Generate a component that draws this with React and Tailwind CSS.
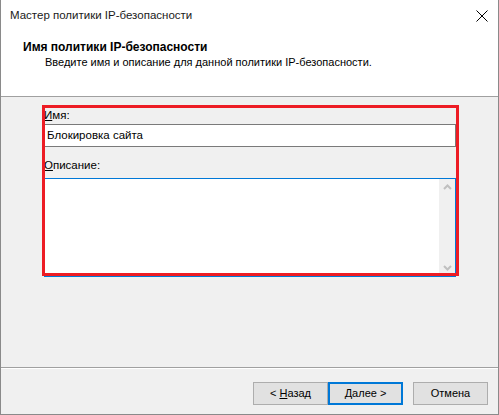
const Btn = ({ children, primary }) => (
  <button
    className={
      primary
        ? 'w-[75px] h-[23px] bg-[#e1e1e1] border-2 border-[#0078d7] text-[11px] text-black flex items-center justify-center'
        : 'w-[75px] h-[23px] bg-[#e1e1e1] border border-[#adadad] text-[11px] text-black flex items-center justify-center'
    }
  >
    <span>{children}</span>
  </button>
);

const App = () => {
  return (
    <div
      className="w-[499px] h-[415px] flex flex-col bg-[#f0f0f0] border-x border-b border-[#8a8a8a] text-black"
      style={{ fontFamily: '"Liberation Sans", Arial, sans-serif' }}
    >
      {/* Title bar */}
      <div className="h-[31px] bg-white flex items-center justify-between pl-[9px] pr-[9px]">
        <span className="text-[11.5px] text-[#1a1a1a]">Мастер политики IP-безопасности</span>
        <svg width="12" height="12" viewBox="0 0 12 12" className="mr-[1px]">
          <path d="M0.5 0.5 L11.5 11.5 M11.5 0.5 L0.5 11.5" stroke="#000" strokeWidth="1" />
        </svg>
      </div>

      {/* Header */}
      <div className="h-[65px] bg-white pt-[9px] pl-[22px]">
        <div className="text-[12px] font-bold leading-[15px]">Имя политики IP-безопасности</div>
        <div className="text-[11px] leading-[15px] pl-[22px]">
          Введите имя и описание для данной политики IP-безопасности.
        </div>
      </div>
      <div className="h-px bg-[#a0a0a0]" />

      {/* Body */}
      <div className="flex-1 relative">
        <div className="ml-[43px] mt-[8px] w-[412px] flex flex-col text-[11.5px]">
          <div className="h-[19px] pt-[3px] leading-[14px]">
            <span className="underline">И</span>мя:
          </div>
          <div className="h-[23px] bg-white border border-[#7a7a7a] flex items-center pl-[2px]">
            Блокировка сайта
          </div>
          <div className="h-[31px] pt-[11px] leading-[14px]">
            <span className="underline">О</span>писание:
          </div>
          <div className="h-[99px] bg-white border border-[#0078d7] flex justify-end">
            <div className="w-[16px] bg-[#f0f0f0] flex flex-col items-center justify-between py-[5px]">
              <svg width="9" height="6" viewBox="0 0 9 6">
                <path d="M1 5 L4.5 1.5 L8 5" stroke="#c0c0c0" strokeWidth="2" fill="none" />
              </svg>
              <svg width="9" height="6" viewBox="0 0 9 6">
                <path d="M1 1 L4.5 4.5 L8 1" stroke="#c0c0c0" strokeWidth="2" fill="none" />
              </svg>
            </div>
          </div>
        </div>
        {/* Red highlight */}
        <div className="absolute left-[41px] top-[8px] w-[417px] h-[171px] border-[3px] border-[#ed1c24] pointer-events-none" />
      </div>

      {/* Footer */}
      <div className="h-px bg-[#a0a0a0]" />
      <div className="h-px bg-white" />
      <div className="h-[45px] flex justify-end items-start pt-[13px] pr-[10px]">
        <div className="flex">
          <Btn>
            &lt; <span className="underline">Н</span>азад
          </Btn>
          <Btn primary>
            <span className="underline">Д</span>алее &gt;
          </Btn>
        </div>
        <div className="ml-[10px]">
          <Btn>Отмена</Btn>
        </div>
      </div>
    </div>
  );
};

export default App;
